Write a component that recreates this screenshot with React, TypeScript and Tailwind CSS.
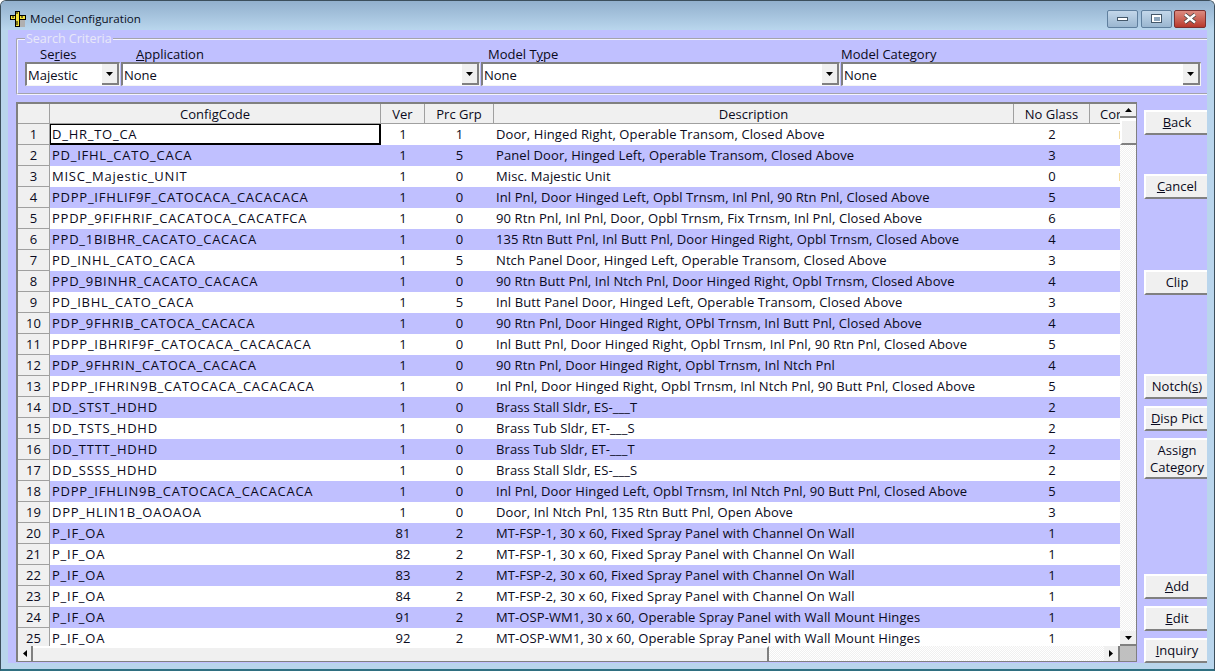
import type { ReactNode } from 'react'

const rows: [string, number, number, string, number][] = [
  ['D_HR_TO_CA', 1, 1, 'Door, Hinged Right, Operable Transom, Closed Above', 2],
  ['PD_IFHL_CATO_CACA', 1, 5, 'Panel Door, Hinged Left, Operable Transom, Closed Above', 3],
  ['MISC_Majestic_UNIT', 1, 0, 'Misc. Majestic Unit', 0],
  ['PDPP_IFHLIF9F_CATOCACA_CACACACA', 1, 0, 'Inl Pnl, Door Hinged Left, Opbl Trnsm, Inl Pnl, 90 Rtn Pnl, Closed Above', 5],
  ['PPDP_9FIFHRIF_CACATOCA_CACATFCA', 1, 0, '90 Rtn Pnl, Inl Pnl, Door, Opbl Trnsm, Fix Trnsm, Inl Pnl, Closed Above', 6],
  ['PPD_1BIBHR_CACATO_CACACA', 1, 0, '135 Rtn Butt Pnl, Inl Butt Pnl, Door Hinged Right, Opbl Trnsm, Closed Above', 4],
  ['PD_INHL_CATO_CACA', 1, 5, 'Ntch Panel Door, Hinged Left, Operable Transom, Closed Above', 3],
  ['PPD_9BINHR_CACATO_CACACA', 1, 0, '90 Rtn Butt Pnl, Inl Ntch Pnl, Door Hinged Right, Opbl Trnsm, Closed Above', 4],
  ['PD_IBHL_CATO_CACA', 1, 5, 'Inl Butt Panel Door, Hinged Left, Operable Transom, Closed Above', 3],
  ['PDP_9FHRIB_CATOCA_CACACA', 1, 0, '90 Rtn Pnl, Door Hinged Right, OPbl Trnsm, Inl Butt Pnl, Closed Above', 4],
  ['PDPP_IBHRIF9F_CATOCACA_CACACACA', 1, 0, 'Inl Butt Pnl, Door Hinged Right, Opbl Trnsm, Inl Pnl, 90 Rtn Pnl, Closed Above', 5],
  ['PDP_9FHRIN_CATOCA_CACACA', 1, 0, '90 Rtn Pnl, Door Hinged Right, Opbl Trnsm, Inl Ntch Pnl', 4],
  ['PDPP_IFHRIN9B_CATOCACA_CACACACA', 1, 0, 'Inl Pnl, Door Hinged Right, Opbl Trnsm, Inl Ntch Pnl, 90 Butt Pnl, Closed Above', 5],
  ['DD_STST_HDHD', 1, 0, 'Brass Stall Sldr, ES-___T', 2],
  ['DD_TSTS_HDHD', 1, 0, 'Brass Tub Sldr, ET-___S', 2],
  ['DD_TTTT_HDHD', 1, 0, 'Brass Tub Sldr, ET-___T', 2],
  ['DD_SSSS_HDHD', 1, 0, 'Brass Stall Sldr, ES-___S', 2],
  ['PDPP_IFHLIN9B_CATOCACA_CACACACA', 1, 0, 'Inl Pnl, Door Hinged Left, Opbl Trnsm, Inl Ntch Pnl, 90 Butt Pnl, Closed Above', 5],
  ['DPP_HLIN1B_OAOAOA', 1, 0, 'Door, Inl Ntch Pnl, 135 Rtn Butt Pnl, Open Above', 3],
  ['P_IF_OA', 81, 2, 'MT-FSP-1, 30 x 60, Fixed Spray Panel with Channel On Wall', 1],
  ['P_IF_OA', 82, 2, 'MT-FSP-1, 30 x 60, Fixed Spray Panel with Channel On Wall', 1],
  ['P_IF_OA', 83, 2, 'MT-FSP-2, 30 x 60, Fixed Spray Panel with Channel On Wall', 1],
  ['P_IF_OA', 84, 2, 'MT-FSP-2, 30 x 60, Fixed Spray Panel with Channel On Wall', 1],
  ['P_IF_OA', 91, 2, 'MT-OSP-WM1, 30 x 60, Operable Spray Panel with Wall Mount Hinges', 1],
  ['P_IF_OA', 92, 2, 'MT-OSP-WM1, 30 x 60, Operable Spray Panel with Wall Mount Hinges', 1],
]

function Arrow({ dir }: { dir: 'up' | 'down' | 'left' | 'right' }) {
  const pts = {
    up: '0,4 7,4 3.5,0',
    down: '0,0 7,0 3.5,4',
    left: '4,0 4,7 0,3.5',
    right: '0,0 0,7 4,3.5',
  }[dir]
  const vertical = dir === 'up' || dir === 'down'
  return (
    <svg width={vertical ? 7 : 4} height={vertical ? 4 : 7} className="fill-black">
      <polygon points={pts} />
    </svg>
  )
}

function Combo({ value, width }: { value: string; width: string }) {
  return (
    <div className={`flex h-[24px] border-t-2 border-l-2 border-r border-b border-t-[#808080] border-l-[#808080] border-r-[#f4f4f4] border-b-[#f4f4f4] bg-white ${width}`}>
      <span className="flex-1 pl-[1px] leading-[23px]">{value}</span>
      <div className="flex h-[21px] w-[17px] items-center justify-center border-b-2 border-r-2 border-[#808080] bg-[#f0f0f0]">
        <Arrow dir="down" />
      </div>
    </div>
  )
}

function SideButton({ className, children }: { className: string; children: ReactNode }) {
  return (
    <button className={`block w-[64px] border-t-2 border-l-2 border-b-2 border-t-white border-l-white border-b-[#808080] bg-[#f0f0f0] text-center leading-[17px] ${className}`}>
      {children}
    </button>
  )
}

function HeaderCell({ width, children }: { width: string; children?: ReactNode }) {
  return (
    <div className={`shrink-0 border-r border-[#a0a0a0] text-center leading-[20px] ${width}`}>{children}</div>
  )
}

const dither = 'bg-[repeating-conic-gradient(#ffffff_0_25%,#f0f0f0_0_50%)] bg-[length:2px_2px]'

function WindowButton({ className, children }: { className: string; children: ReactNode }) {
  return (
    <div className={`flex h-[18px] items-center justify-center rounded-[2px] border border-[#5f7f9e] ${className}`}>
      {children}
    </div>
  )
}

export default function App() {
  return (
    <div className="flex h-[671px] w-[1215px] flex-col overflow-hidden rounded-t-[6px] border border-b-2 border-[#3c4f5c] border-b-[#2f6f80] bg-[#b9d5ec] font-['Open_Sans',sans-serif] text-[13px] text-[#0a0a20]">
      {/* Title bar */}
      <div className="flex h-[29px] shrink-0 items-center bg-gradient-to-b from-[#92b0cd] to-[#b9d6ed] pt-[6px] pr-[8px] pl-[9px]">
        <svg width="16" height="16" viewBox="0 0 16 16" className="mr-[4px] shrink-0">
          <rect x="5" y="8" width="10" height="8" fill="#b0b0b0" />
          <rect x="0.5" y="4.5" width="15" height="4" fill="#f5e33a" stroke="#000" strokeWidth="1" />
          <rect x="5.5" y="0.5" width="4" height="15" fill="#f5e33a" stroke="#000" strokeWidth="1" />
          <path d="M3 5v2M6 2h2M12 5v2M6 11h2M6 13h2" stroke="#000" strokeWidth="1" />
        </svg>
        <span className="flex-1 text-[11.6px] text-[#0a0f1e]">Model Configuration</span>
        <WindowButton className="mr-[3px] w-[31px] bg-gradient-to-b from-[#c3d7ea] to-[#9ab6d0]">
          <div className="h-[4px] w-[11px] border border-[#44586b] bg-white" />
        </WindowButton>
        <WindowButton className="mr-[2px] w-[31px] bg-gradient-to-b from-[#c3d7ea] to-[#9ab6d0]">
          <div className="flex h-[9px] w-[11px] items-center justify-center border border-[#44586b] bg-white">
            <div className="h-[4px] w-[6px] bg-[#8ba4bb]" />
          </div>
        </WindowButton>
        <WindowButton className="w-[32px] border-[#7a3030] bg-gradient-to-b from-[#dc8a80] to-[#b8382c]">
          <svg width="14" height="11" viewBox="0 0 14 11">
            <path d="M2 1.5 L12 9.5 M12 1.5 L2 9.5" stroke="#3c3c3c" strokeWidth="4" />
            <path d="M2 1.5 L12 9.5 M12 1.5 L2 9.5" stroke="#fff" strokeWidth="2.5" />
          </svg>
        </WindowButton>
      </div>

      {/* Client area */}
      <div className="ml-[7px] flex h-[633px] w-[1199px] flex-col overflow-hidden bg-[#c0c0ff] pl-[8px]">
        {/* Search criteria */}
        <fieldset className="mt-[2px] h-[63px] w-[1200px] rounded-[2px] border-2 border-r-0 border-[#f4f4ff] px-[7px] [border-style:groove]">
          <legend className="h-[14px] px-[1px] text-[12.5px] leading-[14px] text-[#e8e8f8]">Search Criteria</legend>
          <div className="flex gap-[1px]">
            <div>
              <div className="h-[16px] pl-[15px] leading-[16px]">Se<u>r</u>ies</div>
              <Combo value="Majestic" width="w-[95px]" />
            </div>
            <div>
              <div className="h-[16px] pl-[15px] leading-[16px]"><u>A</u>pplication</div>
              <Combo value="None" width="w-[359px]" />
            </div>
            <div>
              <div className="h-[16px] pl-[7px] leading-[16px]">Model T<u>y</u>pe</div>
              <Combo value="None" width="w-[359px]" />
            </div>
            <div>
              <div className="h-[16px] leading-[16px]">Model Cate<u>g</u>ory</div>
              <Combo value="None" width="w-[360px]" />
            </div>
          </div>
        </fieldset>

        <div className="mt-[7px] flex">
          {/* Grid */}
          <div className="flex h-[560px] w-[1121px] shrink-0 flex-col border-2 border-r border-b border-[#808080] bg-white">
            <div className="flex min-h-0 flex-1">
              <div className="w-[1102px] shrink-0 overflow-hidden">
                <div className="flex h-[20px] border-b border-[#a0a0a0] bg-[#f0f0f0]">
                  <HeaderCell width="w-[32px]" />
                  <HeaderCell width="w-[331px]">ConfigCode</HeaderCell>
                  <HeaderCell width="w-[44px]">Ver</HeaderCell>
                  <HeaderCell width="w-[69px]">Prc Grp</HeaderCell>
                  <HeaderCell width="w-[520px]">Description</HeaderCell>
                  <HeaderCell width="w-[76px]">No Glass</HeaderCell>
                  <div className="w-[30px] shrink-0 overflow-hidden whitespace-nowrap pl-[10px] leading-[20px]">Cor</div>
                </div>
                <div className="h-[522px] overflow-hidden">
                  {rows.map((r, i) => (
                    <div key={i} className={`flex h-[21px] leading-[20px] ${i % 2 ? 'bg-[#c0c0ff]' : 'bg-white'}`}>
                      <div className="w-[32px] shrink-0 border-r border-b border-[#a0a0a0] bg-[#f0f0f0] text-center">{i + 1}</div>
                      <div className={`w-[331px] shrink-0 whitespace-nowrap tracking-[0.75px] ${i === 0 ? 'border-t border-l border-r-2 border-b-2 border-black pl-[1px] leading-[18px]' : 'pl-[2px]'}`}>{r[0]}</div>
                      <div className="w-[44px] shrink-0 text-center">{r[1]}</div>
                      <div className="w-[69px] shrink-0 text-center">{r[2]}</div>
                      <div className="w-[520px] shrink-0 whitespace-nowrap pl-[2px] tracking-[0.1px]">{r[3]}</div>
                      <div className="w-[76px] shrink-0 text-center">{r[4]}</div>
                      <div className="flex w-[30px] shrink-0 items-center justify-end">
                        {(i === 0 || i === 2) && <div className="h-[8px] w-px bg-[#f5dca0]" />}
                      </div>
                    </div>
                  ))}
                </div>
              </div>
              {/* Vertical scrollbar */}
              <div className="flex w-[16px] shrink-0 flex-col">
                <div className="flex h-[14px] items-center justify-center border-b-2 border-[#808080] bg-[#f0f0f0]">
                  <Arrow dir="up" />
                </div>
                <div className="mt-px h-[26px] border-t-2 border-l-2 border-b-2 border-t-white border-l-white border-b-[#808080] bg-[#f0f0f0]" />
                <div className={`flex-1 ${dither}`} />
                <div className="flex h-[15px] items-center justify-center border-b-2 border-[#808080] bg-[#f0f0f0] pt-px">
                  <Arrow dir="down" />
                </div>
              </div>
            </div>
            {/* Horizontal scrollbar */}
            <div className="flex h-[15px] shrink-0">
              <div className="flex w-[15px] shrink-0 items-center justify-center border-r-2 border-[#808080] bg-[#f0f0f0]">
                <Arrow dir="left" />
              </div>
              <div className="w-[736px] shrink-0 border-t-2 border-r-2 border-t-white border-r-[#808080] bg-[#f0f0f0]" />
              <div className={`flex-1 ${dither}`} />
              <div className="flex w-[16px] shrink-0 items-center justify-center border-r-2 border-[#808080] bg-[#f0f0f0]">
                <Arrow dir="right" />
              </div>
              <div className="w-[16px] shrink-0 bg-[#c0c0c0]" />
            </div>
          </div>

          {/* Side buttons */}
          <div className="ml-[7px] flex flex-col">
            <SideButton className="mt-[8px] h-[25px]"><u>B</u>ack</SideButton>
            <SideButton className="mt-[39px] h-[25px]"><u>C</u>ancel</SideButton>
            <SideButton className="mt-[71px] h-[25px]">Clip</SideButton>
            <SideButton className="mt-[79px] h-[25px]">Notch(<u>s</u>)</SideButton>
            <SideButton className="mt-[7px] h-[25px]"><u>D</u>isp Pict</SideButton>
            <SideButton className="mt-[7px] h-[41px]">Assi<u>g</u>n<br />Category</SideButton>
            <SideButton className="mt-[95px] h-[25px]"><u>A</u>dd</SideButton>
            <SideButton className="mt-[7px] h-[25px]"><u>E</u>dit</SideButton>
            <SideButton className="mt-[7px] h-[25px]"><u>I</u>nquiry</SideButton>
          </div>
        </div>
      </div>
    </div>
  )
}
